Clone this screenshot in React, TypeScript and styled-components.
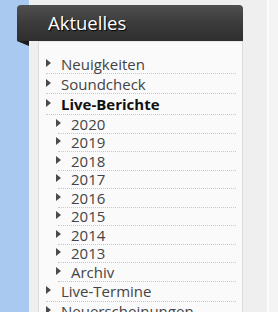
import styled, { createGlobalStyle } from 'styled-components';

const GlobalStyle = createGlobalStyle`
  html, body {
    margin: 0;
    padding: 0;
  }
  body {
    font-family: "Open Sans", "Noto Sans", sans-serif;
  }
`;

const Page = styled.div`
  min-height: 312px;
  box-sizing: border-box;
  padding: 5px 0 0 17px;
  background: linear-gradient(
    to right,
    #a9c9f1 0 29px,
    #efefef 29px 267px,
    #fcfcfc 267px 269px,
    #f4f4f4 269px
  );
`;

const Widget = styled.div`
  width: 226px;
`;

const Header = styled.h2`
  margin: 0;
  height: 36px;
  padding-left: 31px;
  border-radius: 4px 4px 0 0;
  background: linear-gradient(to bottom, #4f4f4f 0%, #3d3d3d 45%, #2e2e2e 100%);
  color: #fff;
  font-size: 18.5px;
  font-weight: 400;
  line-height: 36px;
  text-shadow: 1px 1px 1px #000;
`;

const Body = styled.div`
  display: flex;
  align-items: flex-start;
`;

const Fold = styled.span`
  width: 0;
  height: 0;
  border-top: 5px solid #1c1c1c;
  border-left: 12px solid transparent;
  margin-right: 9px;
`;

const Panel = styled.div`
  flex: 1;
  min-height: 280px;
  background: #fafafa;
  border: 1px solid #dcdcdc;
  border-top: 1px solid #e8e8e8;
  padding: 12px 6px 0 7px;
`;

const Menu = styled.ul`
  list-style: none;
  margin: 0;
  padding: 0;
`;

const Row = styled.a<{ $sub?: boolean; $active?: boolean }>`
  display: flex;
  align-items: center;
  height: ${(p) => (p.$sub ? '17.5px' : p.$active ? '20px' : '19px')};
  margin-left: ${(p) => (p.$sub ? '12px' : '0')};
  border-bottom: 1px dotted #c8c8c8;
  color: ${(p) => (p.$active ? '#111' : '#444')};
  font-size: 15px;
  font-weight: ${(p) => (p.$active ? 700 : 400)};
  text-decoration: none;
  white-space: nowrap;
`;

const Arrow = styled.span<{ $sub?: boolean }>`
  width: 0;
  height: 0;
  border-left: 5px solid #4a4a4a;
  border-top: 4px solid transparent;
  border-bottom: 4px solid transparent;
  margin-left: ${(p) => (p.$sub ? '-2px' : '0')};
  margin-right: 10px;
  margin-top: -2px;
`;

const years = ['2020', '2019', '2018', '2017', '2016', '2015', '2014', '2013', 'Archiv'];

const Item = ({ label, sub, active }: { label: string; sub?: boolean; active?: boolean }) => (
  <li>
    <Row href="#" $sub={sub} $active={active}>
      <Arrow $sub={sub} />
      {label}
    </Row>
  </li>
);

export default function App() {
  return (
    <>
      <GlobalStyle />
      <Page>
        <Widget>
          <Header>Aktuelles</Header>
          <Body>
            <Fold />
            <Panel>
              <Menu>
                <Item label="Neuigkeiten" />
                <Item label="Soundcheck" />
                <Item label="Live-Berichte" active />
                {years.map((y) => (
                  <Item key={y} label={y} sub />
                ))}
                <Item label="Live-Termine" />
                <Item label="Neuerscheinungen" />
              </Menu>
            </Panel>
          </Body>
        </Widget>
      </Page>
    </>
  );
}
